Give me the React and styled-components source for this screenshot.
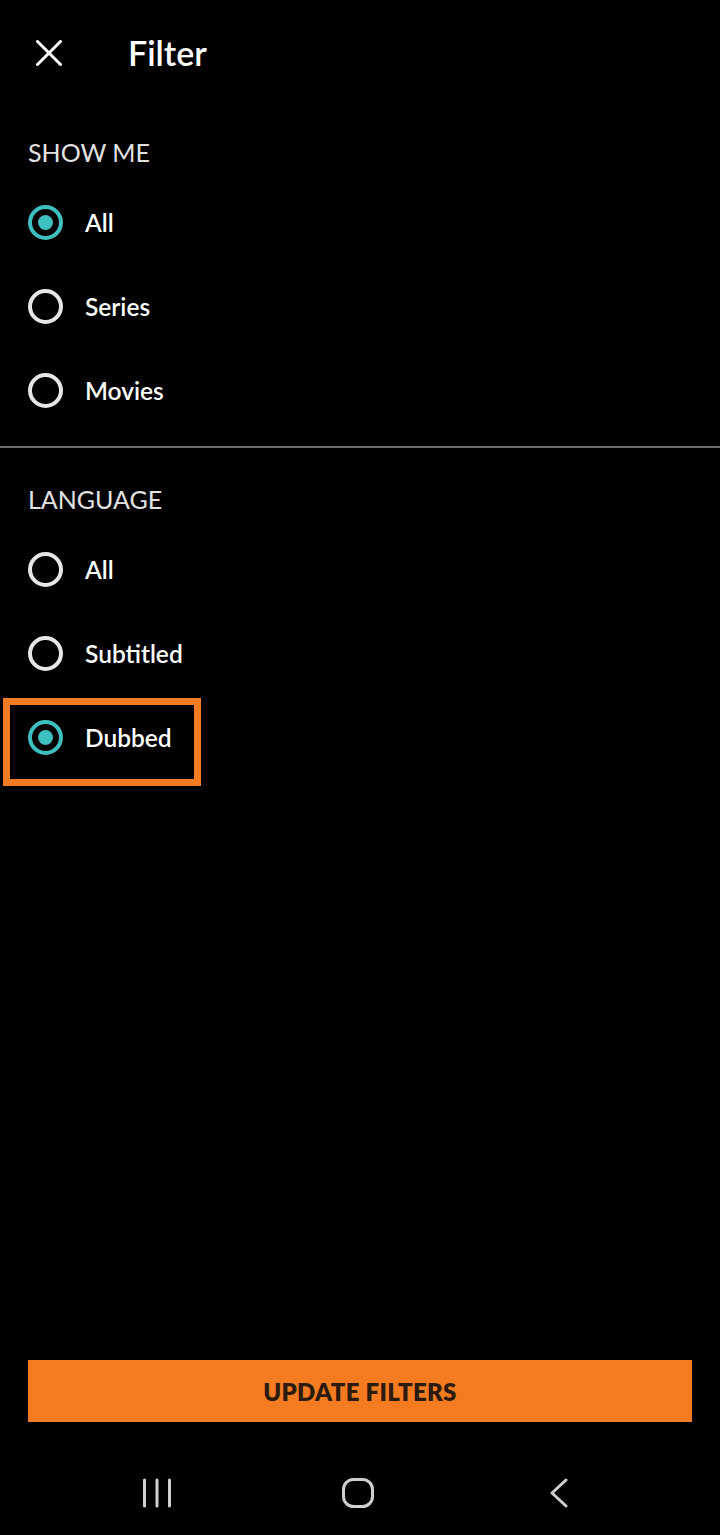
import React, { useState } from 'react';
import styled, { createGlobalStyle } from 'styled-components';

const GlobalStyle = createGlobalStyle`
  html, body {
    margin: 0;
    padding: 0;
    background: #000;
  }
  body {
    font-family: Lato, "Open Sans", "Liberation Sans", sans-serif;
  }
`;

const StyledScreen = styled.div`
  display: flex;
  flex-direction: column;
  width: 720px;
  height: 1535px;
  background: #000;
  color: #fff;
`;

const StyledHeader = styled.div`
  display: flex;
  flex-direction: row;
  align-items: center;
  height: 106px;
  padding-left: 36px;
  gap: 66px;

  .close-btn {
    display: flex;
    width: 26px;
    height: 26px;
    padding: 0;
    border: none;
    background: none;
    cursor: pointer;
  }

  .header-title {
    font-size: 34px;
    font-weight: 600;
    color: #fff;
    line-height: 1;
  }
`;

const StyledSection = styled.div`
  display: flex;
  flex-direction: column;
  padding: ${props => props.$top}px 28px 14px;

  .section-title {
    height: 48px;
    line-height: 48px;
    margin-bottom: 4px;
    font-size: 25px;
    font-weight: 400;
    color: #e2e2e2;
  }
`;

const StyledDivider = styled.div`
  height: 2px;
  background: #6e6e6e;
`;

const StyledOption = styled.label`
  position: relative;
  display: flex;
  flex-direction: row;
  align-items: center;
  gap: 22px;
  height: 84px;
  cursor: pointer;
  font-size: 24.5px;
  font-weight: 600;
  color: #fff;
`;

const StyledRadio = styled.span`
  display: flex;
  align-items: center;
  justify-content: center;
  box-sizing: border-box;
  width: 35px;
  height: 35px;
  border-radius: 50%;
  border: 4px solid ${props => (props.$checked ? '#3ebfc0' : '#e6e6e6')};

  &::after {
    content: '';
    display: ${props => (props.$checked ? 'block' : 'none')};
    width: 15px;
    height: 15px;
    border-radius: 50%;
    background: #3ebfc0;
  }
`;

const StyledHighlight = styled.span`
  position: absolute;
  left: -25px;
  top: 3px;
  width: 198px;
  height: 88px;
  box-sizing: border-box;
  border: 7px solid #f47b20;
  pointer-events: none;
`;

const StyledSpacer = styled.div`
  flex: 1;
`;

const StyledUpdateButton = styled.button`
  margin: 0 28px 29px;
  height: 62px;
  border: none;
  background: #f47b20;
  color: #2e1b10;
  font-family: Lato, "Open Sans", "Liberation Sans", sans-serif;
  font-size: 24px;
  font-weight: 800;
  letter-spacing: 0.3px;
  cursor: pointer;
`;

const StyledNavBar = styled.div`
  display: flex;
  flex-direction: row;
  align-items: center;
  justify-content: center;
  gap: 141px;
  height: 84px;
  padding-right: 4px;

  .nav-slot {
    display: flex;
    align-items: center;
    justify-content: center;
    width: 60px;
    height: 40px;
  }
`;

const SHOW_OPTIONS = ['All', 'Series', 'Movies'];
const LANGUAGE_OPTIONS = ['All', 'Subtitled', 'Dubbed'];

function CloseIcon() {
  return (
    <svg width="26" height="26" viewBox="0 0 26 26">
      <path d="M1.5 1.5 L24.5 24.5 M24.5 1.5 L1.5 24.5" stroke="#fff" strokeWidth="3" strokeLinecap="round" />
    </svg>
  );
}

function RadioGroup({ options, value, onChange, highlight }) {
  return options.map(option => (
    <StyledOption key={option} onClick={() => onChange(option)}>
      <StyledRadio $checked={value === option} />
      {option}
      {highlight === option && <StyledHighlight />}
    </StyledOption>
  ));
}

function App() {
  const [showMe, setShowMe] = useState('All');
  const [language, setLanguage] = useState('Dubbed');

  return (
    <StyledScreen>
      <GlobalStyle />
      <StyledHeader>
        <button className="close-btn" aria-label="Close">
          <CloseIcon />
        </button>
        <div className="header-title">Filter</div>
      </StyledHeader>

      <StyledSection $top={22}>
        <div className="section-title">SHOW ME</div>
        <RadioGroup options={SHOW_OPTIONS} value={showMe} onChange={setShowMe} />
      </StyledSection>

      <StyledDivider />

      <StyledSection $top={27}>
        <div className="section-title">LANGUAGE</div>
        <RadioGroup
          options={LANGUAGE_OPTIONS}
          value={language}
          onChange={setLanguage}
          highlight="Dubbed"
        />
      </StyledSection>

      <StyledSpacer />

      <StyledUpdateButton>UPDATE FILTERS</StyledUpdateButton>

      <StyledNavBar>
        <div className="nav-slot">
          <svg width="30" height="30" viewBox="0 0 30 30">
            <path d="M2.5 2 V28 M15 2 V28 M27.5 2 V28" stroke="#cfcfcf" strokeWidth="3" strokeLinecap="round" />
          </svg>
        </div>
        <div className="nav-slot">
          <svg width="34" height="32" viewBox="0 0 34 32">
            <rect x="2.5" y="2.5" width="29" height="27" rx="10" fill="none" stroke="#cfcfcf" strokeWidth="3" />
          </svg>
        </div>
        <div className="nav-slot">
          <svg width="20" height="30" viewBox="0 0 20 30">
            <path d="M17 2 L3 15 L17 28" fill="none" stroke="#cfcfcf" strokeWidth="3" strokeLinecap="round" strokeLinejoin="round" />
          </svg>
        </div>
      </StyledNavBar>
    </StyledScreen>
  );
}

export default App;
